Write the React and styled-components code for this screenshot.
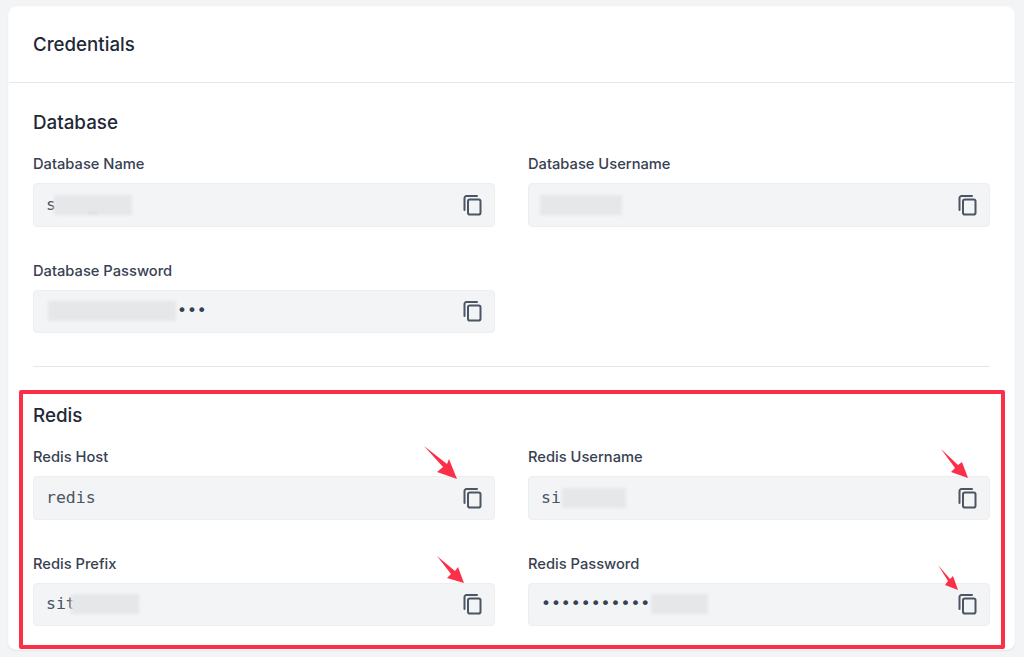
import React from "react";
import styled, { createGlobalStyle } from "styled-components";

const Global = createGlobalStyle`
  html, body { margin: 0; padding: 0; background: #f3f4f6; }
  body { font-family: Inter, "Liberation Sans", sans-serif; color: #1f2937; }
`;

const Page = styled.div`
  position: relative;
  width: 1024px;
  height: 657px;
  box-sizing: border-box;
  padding: 6px 9px 7px 8px;
  overflow: hidden;
`;

const Card = styled.section`
  height: 100%;
  box-sizing: border-box;
  background: #fff;
  border: 1px solid #fbfbfc;
  border-radius: 8px;
  box-shadow: 0 1px 2px rgba(17, 24, 39, 0.06);
  overflow: hidden;
`;

const CardHeader = styled.header`
  height: 76px;
  box-sizing: border-box;
  display: flex;
  align-items: center;
  padding: 0 24px;
  border-bottom: 1px solid #e5e7eb;
`;

const CardTitle = styled.h2`
  margin: 0;
  font-size: 18.7px;
  line-height: 28px;
  font-weight: 500;
  color: #1f2937;
`;

const CardBody = styled.div`
  padding: 25px 24px 0;
`;

const Group = styled.div`
  padding-bottom: ${(p) => (p.$divided ? "33px" : "0")};
  margin-bottom: ${(p) => (p.$divided ? "34px" : "0")};
  border-bottom: ${(p) => (p.$divided ? "1px solid #e5e7eb" : "none")};
`;

const GroupTitle = styled.h3`
  margin: 0 0 16px;
  font-size: 18.8px;
  line-height: 30px;
  font-weight: 500;
  color: #1f2937;
`;

const FieldGrid = styled.div`
  display: grid;
  grid-template-columns: 462px 462px;
  column-gap: 33px;
  row-gap: 34px;
`;

const Field = styled.div`
  display: flex;
  flex-direction: column;
  gap: 9px;
`;

const Label = styled.label`
  font-size: 14.7px;
  line-height: 20px;
  font-weight: 500;
  color: #374151;
`;

const ValueBox = styled.div`
  height: 43.5px;
  box-sizing: border-box;
  display: flex;
  align-items: center;
  justify-content: space-between;
  padding: 0 12px;
  background: #f3f4f6;
  border: 1px solid #eceef1;
  border-radius: 4px;
`;

const Value = styled.div`
  display: flex;
  align-items: center;
  font-family: "DejaVu Sans Mono", "Liberation Mono", monospace;
  font-size: 16.5px;
  line-height: 24px;
  color: #4b5563;
  white-space: pre;
`;

const Dots = styled.span`
  color: #374151;
`;

const Blur = styled.span`
  display: inline-block;
  flex: none;
  width: ${(p) => p.$w}px;
  height: 20px;
  margin-left: ${(p) => p.$ml || 0}px;
  margin-right: ${(p) => p.$mr || 0}px;
  background: #e6e7e9;
  filter: blur(1.5px);
  color: #b9bcc2;
  line-height: 19px;
  text-align: center;
  overflow: hidden;
`;

const CopyButton = styled.button`
  display: flex;
  padding: 0;
  margin: 0;
  border: 0;
  background: none;
  color: #4b5563;
`;

const Highlight = styled.div`
  position: absolute;
  left: 18.5px;
  top: 389.5px;
  width: 986px;
  height: 259.5px;
  box-sizing: border-box;
  border: 4.5px solid #fb3048;
  border-radius: 2px;
  pointer-events: none;
`;

const ArrowLayer = styled.svg`
  position: absolute;
  left: 0;
  top: 0;
  width: 1024px;
  height: 657px;
  pointer-events: none;
`;

const CopyIcon = () => (
  <svg width="20" height="22" viewBox="0 0 20 22" fill="none" stroke="currentColor" strokeWidth="2" strokeLinejoin="round" strokeLinecap="round">
    <path d="M15 2H4.5A2 2 0 0 0 2.500 4v12" />
    <rect x="6" y="5.500" width="12.500" height="15" rx="1.800" />
  </svg>
);

const Row = ({ label, children }) => (
  <Field>
    <Label>{label}</Label>
    <ValueBox>
      <Value>{children}</Value>
      <CopyButton aria-label={`Copy ${label}`}>
        <CopyIcon />
      </CopyButton>
    </ValueBox>
  </Field>
);

const arrows = [
  "424,446 447,464 449,459 457,479 437,472 443,467",
  "941,449 958,465 962,462 968,478 951,472 955,468",
  "437,556 455,571 458,567 464,583 447,578 451,574",
  "938,565 950,579 953,576 958,590 945,585 948,581",
];

export default function App() {
  return (
    <Page>
      <Global />
      <Card>
        <CardHeader>
          <CardTitle>Credentials</CardTitle>
        </CardHeader>
        <CardBody>
          <Group $divided>
            <GroupTitle>Database</GroupTitle>
            <FieldGrid>
              <Row label="Database Name">
                s<Blur $w={78} $ml={-2}>_</Blur>
              </Row>
              <Row label="Database Username">
                <Blur $w={82} $ml={-1} />
              </Row>
              <Row label="Database Password">
                <Blur $w={128} $ml={2} $mr={1} />
                <Dots>•••</Dots>
              </Row>
            </FieldGrid>
          </Group>
          <Group>
            <GroupTitle>Redis</GroupTitle>
            <FieldGrid>
              <Row label="Redis Host">redis</Row>
              <Row label="Redis Username">
                si<Blur $w={64} $ml={1} />
              </Row>
              <Row label="Redis Prefix">
                sit<Blur $w={68} $ml={-5} />
              </Row>
              <Row label="Redis Password">
                <Dots>•••••••••••</Dots>
                <Blur $w={57} $ml={1} />
              </Row>
            </FieldGrid>
          </Group>
        </CardBody>
      </Card>
      <Highlight />
      <ArrowLayer viewBox="0 0 1024 657">
        {arrows.map((points) => (
          <polygon key={points} points={points} fill="#fb3048" />
        ))}
      </ArrowLayer>
    </Page>
  );
}
